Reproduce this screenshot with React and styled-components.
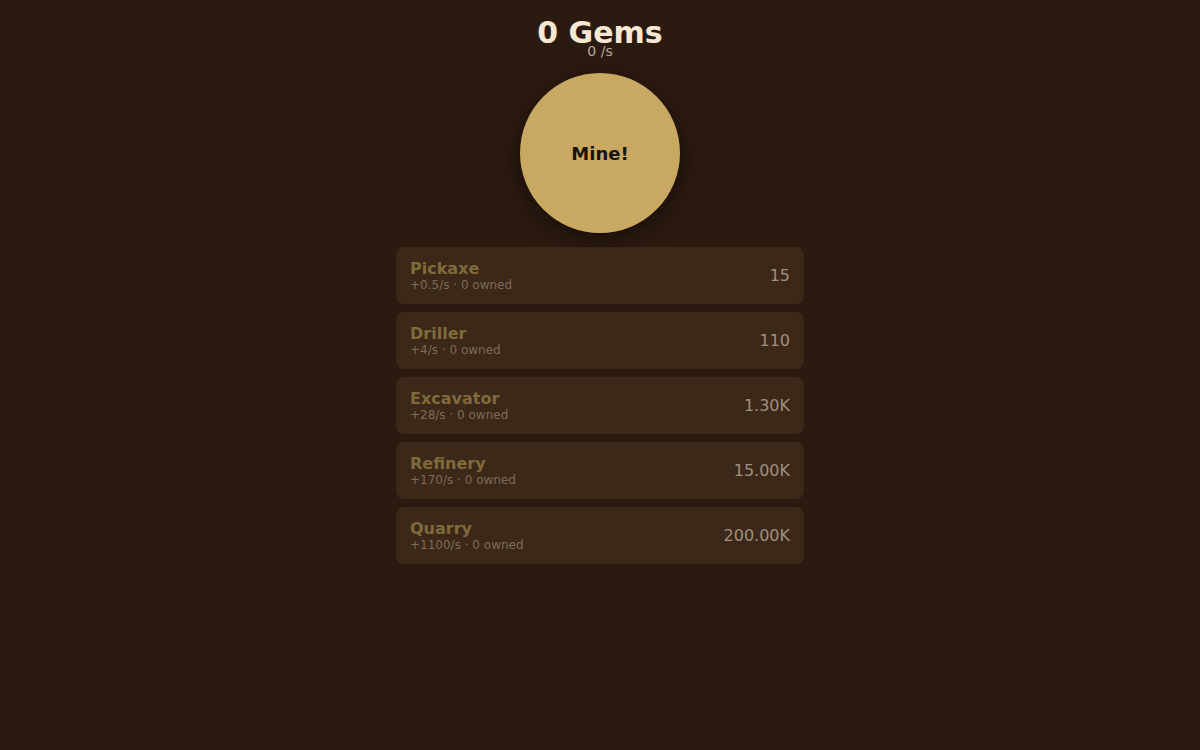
import styled, { createGlobalStyle } from "styled-components";

const GlobalStyle = createGlobalStyle`
  html, body {
    margin: 0;
    padding: 0;
    background: #2b1a10;
    font-family: "DejaVu Sans", sans-serif;
  }
`;

const Page = styled.div`
  min-height: 750px;
  display: flex;
  flex-direction: column;
  align-items: center;
  padding-top: 17px;
  box-sizing: border-box;
`;

const Title = styled.h1`
  margin: 0;
  font-size: 30px;
  line-height: 32px;
  font-weight: bold;
  color: #f7e8d4;
`;

const Rate = styled.div`
  font-size: 14px;
  line-height: 17px;
  color: #b8a898;
  margin-top: -6px;
`;

const MineButton = styled.button`
  width: 160px;
  height: 160px;
  border-radius: 50%;
  border: none;
  background: #c9a961;
  color: #14160a;
  font-family: "DejaVu Sans", sans-serif;
  font-size: 18px;
  font-weight: bold;
  margin-top: 13px;
  box-shadow: 0 6px 24px rgba(0, 0, 0, 0.45);
  cursor: pointer;
`;

const Shop = styled.div`
  width: 408px;
  display: flex;
  flex-direction: column;
  gap: 8px;
  margin-top: 14px;
`;

const Item = styled.button`
  height: 57px;
  border: none;
  border-radius: 8px;
  background: #3b2819;
  display: flex;
  align-items: center;
  justify-content: space-between;
  padding: 0 14px;
  font-family: "DejaVu Sans", sans-serif;
  text-align: left;
  cursor: not-allowed;
`;

const Info = styled.div`
  display: flex;
  flex-direction: column;
`;

const Name = styled.span`
  font-size: 16px;
  font-weight: bold;
  line-height: 18px;
  color: #806a3b;
`;

const Meta = styled.span`
  font-size: 12px;
  line-height: 14px;
  color: #7d6b58;
`;

const Price = styled.span`
  font-size: 16px;
  color: #a08f7c;
`;

const items = [
  { name: "Pickaxe", rate: "+0.5/s", cost: "15" },
  { name: "Driller", rate: "+4/s", cost: "110" },
  { name: "Excavator", rate: "+28/s", cost: "1.30K" },
  { name: "Refinery", rate: "+170/s", cost: "15.00K" },
  { name: "Quarry", rate: "+1100/s", cost: "200.00K" },
];

export default function App() {
  return (
    <>
      <GlobalStyle />
      <Page>
        <Title>0 Gems</Title>
        <Rate>0 /s</Rate>
        <MineButton>Mine!</MineButton>
        <Shop>
          {items.map((it) => (
            <Item key={it.name}>
              <Info>
                <Name>{it.name}</Name>
                <Meta>{it.rate} · 0 owned</Meta>
              </Info>
              <Price>{it.cost}</Price>
            </Item>
          ))}
        </Shop>
      </Page>
    </>
  );
}
